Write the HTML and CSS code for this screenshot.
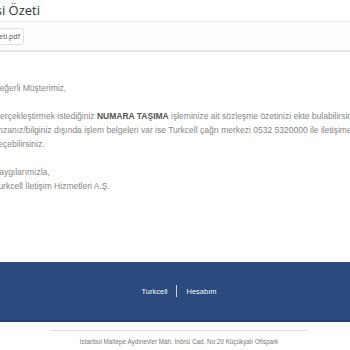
FILE: index.html
```html
<!DOCTYPE html>
<html lang="tr">
<head>
    <meta charset="UTF-8">
    <meta name="viewport" content="width=device-width, initial-scale=1.0">
    <title>Sözleşme Özeti</title>
    <link rel="stylesheet" href="styles.css">
</head>
<body>
    <div class="page">
        <div class="mail-header">
            <div class="subject-box">
                <h1 class="subject">Numara Taşıma Sözleşmesi Özeti</h1>
            </div>
        </div>

        <div class="attachments">
            <div class="attachment-box">
                <span class="attachment">SozlesmeOzeti.pdf</span>
            </div>
        </div>

        <div class="mail-body">
            <p>Değerli Müşterimiz,</p>
            <p>Gerçekleştirmek istediğiniz <strong>NUMARA TAŞIMA</strong> işleminize ait sözleşme özetinizi ekte bulabilirsiniz. İmzanız/bilginiz dışında işlem belgeleri var ise Turkcell çağrı merkezi 0532 5320000 ile iletişime geçebilirsiniz.</p>
            <p>Saygılarımızla,<br>Turkcell İletişim Hizmetleri A.Ş.</p>
        </div>

        <div class="footer">
            <a href="#" class="footer-link">Turkcell</a>
            <span class="divider"></span>
            <a href="#" class="footer-link">Hesabım</a>
        </div>

        <div class="address">
            <p>İstanbul Maltepe Aydınevler Mah. İnönü Cad. No:20 Küçükyalı Ofispark</p>
        </div>
    </div>
</body>
</html>
```

FILE: styles.css
```css
body {
    margin: 0;
    overflow: hidden;
    background-color: white;
    font-family: 'Liberation Sans', Arial, sans-serif;
}

.page {
    width: 424px;
    margin-left: -24px;
}

/* subject line, scrolled partly out of view on the left */
.mail-header {
    height: 21px;
    border-bottom: 1px solid #ececec;
}

.subject-box {
    width: 64px;
    height: 100%;
    display: flex;
    align-items: center;
    justify-content: flex-end;
}

.subject {
    flex-shrink: 0;
    margin: 0 0 1px 0;
    font-family: 'Open Sans', sans-serif;
    font-size: 13px;
    font-weight: normal;
    color: #333;
    white-space: nowrap;
}

.attachments {
    height: 28px;
    background-color: #fdfdfd;
    border-bottom: 2px solid #e6e6e6;
}

.attachment-box {
    width: 48px;
    height: 100%;
    display: flex;
    align-items: center;
    justify-content: flex-end;
}

.attachment {
    flex-shrink: 0;
    padding: 3px 3px;
    font-family: 'Open Sans', sans-serif;
    font-size: 7px;
    color: #555;
    background-color: white;
    border: 1px solid #e0e0e0;
    border-radius: 3px;
    white-space: nowrap;
}

.mail-body {
    padding: 29px 0 0 17.5px;
    height: 181px;
    font-size: 8.5px;
    line-height: 14px;
    color: #868686;
}

.mail-body p {
    margin: 0 0 14px 0;
}

.mail-body strong {
    color: #555;
}

.footer {
    height: 58px;
    padding-right: 18px;
    background-color: #2b4a7e;
    border-bottom: 2px solid #243f6b;
    display: flex;
    align-items: center;
    justify-content: center;
    gap: 9px;
}

.footer-link {
    color: #f2f5fa;
    font-size: 7.5px;
    text-decoration: none;
}

.divider {
    width: 1px;
    height: 12px;
    background-color: #c9d3e3;
}

.address {
    margin: 8px 92px 0 74px;
    border-top: 1px solid #ddd;
    text-align: center;
}

.address p {
    margin: 7px 0;
    font-size: 6.3px;
    color: #777;
}
```
